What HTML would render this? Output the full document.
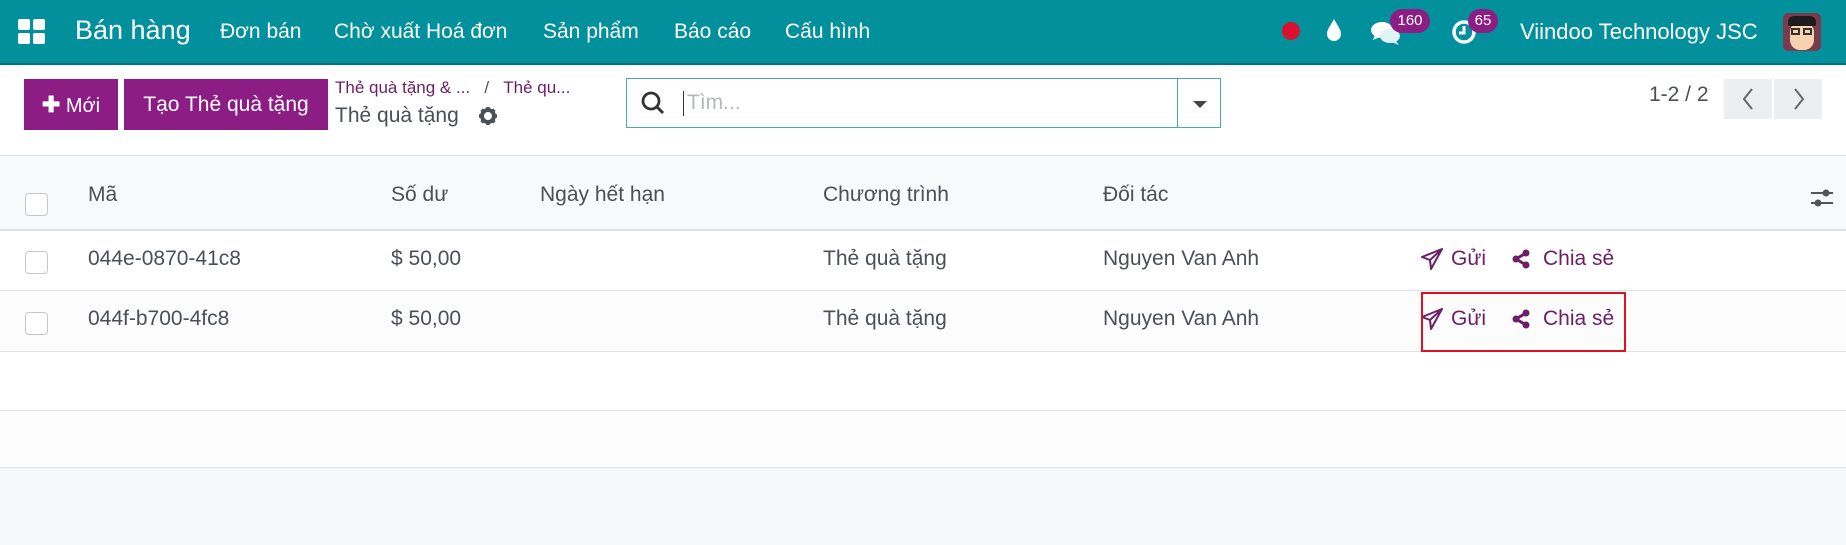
<!DOCTYPE html>
<html><head><meta charset="utf-8"><style>
*{box-sizing:border-box;margin:0;padding:0}
body{width:1846px;height:545px;overflow:hidden;background:#f7f8fa;font-family:"Liberation Sans",sans-serif;color:#374151;position:relative}
.a{position:absolute;white-space:nowrap}
.nav{position:absolute;left:0;top:0;width:1846px;height:65px;background:#01909c;border-bottom:2px solid #05707a}
.nav .a{color:#fff;font-size:21px;top:20px}
.btn{position:absolute;top:79px;height:51px;background:#8c1d84;color:#fff;font-size:21px;line-height:51px;text-align:center}
.hr{position:absolute;left:0;width:1846px;height:1px;background:#dee2e6}
.cb{position:absolute;left:25px;width:23px;height:23px;border:1px solid #c4c8cc;border-radius:4px;background:#fff}
.t{font-size:21px;color:#4b5057}
.l{font-size:21px;color:#6b1f67}
.badge{position:absolute;background:#8c1d84;color:#fff;border-radius:12px;font-size:15px;height:24px;line-height:24px;text-align:center}
</style></head><body>
<div class="nav">
 <svg class="a" style="left:18px;top:19px" width="28" height="26" viewBox="0 0 28 26"><rect x="0" y="0" width="12" height="11" rx="2" fill="#fff"/><rect x="15" y="0" width="12" height="11" rx="2" fill="#fff"/><rect x="0" y="14" width="12" height="11" rx="2" fill="#fff"/><rect x="15" y="14" width="12" height="11" rx="2" fill="#fff"/></svg>
 <div class="a" style="left:75px;top:15px;font-size:27px">Bán hàng</div>
 <div class="a" style="left:220px">Đơn bán</div>
 <div class="a" style="left:334px">Chờ xuất Hoá đơn</div>
 <div class="a" style="left:543px">Sản phẩm</div>
 <div class="a" style="left:674px">Báo cáo</div>
 <div class="a" style="left:785px">Cấu hình</div>
 <div class="a" style="left:1282px;top:22px;width:18px;height:18px;border-radius:50%;background:#d9112c"></div>
 <svg class="a" style="left:1326px;top:18px" width="16" height="24" viewBox="0 0 16 24"><path d="M8 1C5 7 1 11 1 16a7 7 0 0 0 14 0C15 11 11 7 8 1z" fill="#fff"/></svg>
 <svg class="a" style="left:1370px;top:19px" width="32" height="28" viewBox="0 0 32 28"><ellipse cx="12" cy="11" rx="11" ry="8" fill="#fff"/><path d="M5 16l-2 5 7-3z" fill="#fff"/><ellipse cx="20" cy="17" rx="10" ry="7" fill="#e0f2f4"/><path d="M25 21l4 5-8-3z" fill="#e0f2f4"/></svg>
 <div class="badge" style="left:1390px;top:9px;width:40px">160</div>
 <svg class="a" style="left:1451px;top:19px" width="26" height="26" viewBox="0 0 26 26"><circle cx="13" cy="13" r="10" fill="none" stroke="#fff" stroke-width="3.5"/><path d="M13 7v7h-5" fill="none" stroke="#fff" stroke-width="3"/></svg>
 <div class="badge" style="left:1468px;top:9px;width:30px">65</div>
 <div class="a" style="left:1520px;top:19px;font-size:22px">Viindoo Technology JSC</div>
 <div class="a" style="left:1783px;top:13px;width:38px;height:38px;border-radius:5px;background:#7a3b4a;overflow:hidden">
  <div style="position:absolute;left:7px;top:9px;width:24px;height:28px;border-radius:10px;background:#f6d2b0"></div>
  <div style="position:absolute;left:5px;top:3px;width:28px;height:10px;border-radius:6px 6px 2px 2px;background:#1f1a1c"></div>
  <div style="position:absolute;left:8px;top:15px;width:9px;height:7px;border:2px solid #333"></div>
  <div style="position:absolute;left:20px;top:15px;width:9px;height:7px;border:2px solid #333"></div>
 </div>
</div>
<div class="a" style="left:0;top:67px;width:1846px;height:88px;background:#fff"></div>
<div class="btn" style="left:24px;width:94px;font-size:20px"><b style="font-size:22px">✚</b> Mới</div>
<div class="btn" style="left:124px;width:204px">Tạo Thẻ quà tặng</div>
<div class="a" style="left:335px;top:78px;font-size:17px;color:#6b1f67">Thẻ quà tặng &amp; ...&nbsp;&nbsp;&nbsp;<span style="color:#555">/</span>&nbsp;&nbsp;&nbsp;Thẻ qu...</div>
<div class="a" style="left:335px;top:104px;font-size:21px;color:#4b5057">Thẻ quà tặng</div>
<svg class="a" style="left:478px;top:106px" width="20" height="20" viewBox="0 0 20 20"><circle cx="10" cy="10" r="6" fill="none" stroke="#4b5057" stroke-width="4"/><g stroke="#4b5057" stroke-width="3.5"><path d="M10 1v4M10 15v4M1 10h4M15 10h4M3.6 3.6l2.8 2.8M13.6 13.6l2.8 2.8M3.6 16.4l2.8-2.8M13.6 6.4l2.8-2.8"/></g></svg>
<div class="a" style="left:626px;top:78px;width:595px;height:50px;border:1px solid #4aa8b2;background:#fff"></div>
<div class="a" style="left:1177px;top:79px;width:1px;height:48px;background:#4aa8b2"></div>
<svg class="a" style="left:640px;top:90px" width="26" height="26" viewBox="0 0 26 26"><circle cx="11" cy="11" r="8" fill="none" stroke="#333" stroke-width="2.8"/><path d="M17 17l6 6" stroke="#333" stroke-width="3"/></svg>
<div class="a" style="left:683px;top:91px;width:1px;height:25px;background:#333"></div>
<div class="a" style="left:687px;top:91px;font-size:21px;color:#b4b8bd">Tìm...</div>
<div class="a" style="left:1193px;top:101px;border-left:7px solid transparent;border-right:7px solid transparent;border-top:7px solid #444"></div>
<div class="a" style="left:1649px;top:83px;font-size:21px;color:#4b5057">1-2 / 2</div>
<div class="a" style="left:1724px;top:79px;width:48px;height:40px;background:#eceef0"></div>
<div class="a" style="left:1774px;top:79px;width:48px;height:40px;background:#eceef0"></div>
<svg class="a" style="left:1740px;top:87px" width="16" height="24" viewBox="0 0 16 24"><path d="M12 2L4 12l8 10" fill="none" stroke="#666" stroke-width="2"/></svg>
<svg class="a" style="left:1791px;top:87px" width="16" height="24" viewBox="0 0 16 24"><path d="M4 2l8 10-8 10" fill="none" stroke="#666" stroke-width="2"/></svg>
<div class="hr" style="top:155px"></div>
<div class="a" style="left:0;top:156px;width:1846px;height:73px;background:#f8f9fa"></div>
<div class="hr" style="top:229px;height:2px"></div>
<div class="a" style="left:0;top:231px;width:1846px;height:60px;background:#fff"></div>
<div class="hr" style="top:290px"></div>
<div class="a" style="left:0;top:291px;width:1846px;height:60px;background:#fcfcfd"></div>
<div class="hr" style="top:351px"></div>
<div class="a" style="left:0;top:352px;width:1846px;height:58px;background:#fff"></div>
<div class="hr" style="top:410px"></div>
<div class="a" style="left:0;top:411px;width:1846px;height:57px;background:#fcfcfc"></div>
<div class="hr" style="top:467px"></div>
<div class="cb" style="top:193px"></div>
<div class="cb" style="top:251px"></div>
<div class="cb" style="top:312px"></div>
<div class="a t" style="left:88px;top:183px">Mã</div>
<div class="a t" style="left:391px;top:183px">Số dư</div>
<div class="a t" style="left:540px;top:183px">Ngày hết hạn</div>
<div class="a t" style="left:823px;top:183px">Chương trình</div>
<div class="a t" style="left:1103px;top:183px">Đối tác</div>
<svg class="a" style="left:1810px;top:186px" width="24" height="24" viewBox="0 0 24 24"><path d="M1 7h22M1 17h22" stroke="#555" stroke-width="2"/><circle cx="16" cy="7" r="3.5" fill="#555"/><circle cx="8" cy="17" r="3.5" fill="#555"/></svg>
<div class="a t" style="left:88px;top:247px">044e-0870-41c8</div>
<div class="a t" style="left:391px;top:247px">$ 50,00</div>
<div class="a t" style="left:823px;top:247px">Thẻ quà tặng</div>
<div class="a t" style="left:1103px;top:247px">Nguyen Van Anh</div>
<div class="a t" style="left:88px;top:307px">044f-b700-4fc8</div>
<div class="a t" style="left:391px;top:307px">$ 50,00</div>
<div class="a t" style="left:823px;top:307px">Thẻ quà tặng</div>
<div class="a t" style="left:1103px;top:307px">Nguyen Van Anh</div>
<svg class="a" style="left:1421px;top:248px" width="22" height="22" viewBox="0 0 22 22"><path d="M21 1L1 9l8 3 1 9 11-20zM9 12L21 1" fill="none" stroke="#6b1f67" stroke-width="2" stroke-linejoin="round"/></svg>
<div class="a l" style="left:1451px;top:247px">Gửi</div>
<svg class="a" style="left:1511px;top:249px" width="20" height="20" viewBox="0 0 20 20"><path d="M15 4L5 10l10 6" stroke="#6b1f67" stroke-width="3" fill="none"/><circle cx="15" cy="4" r="3.5" fill="#6b1f67"/><circle cx="5" cy="10" r="3.5" fill="#6b1f67"/><circle cx="15" cy="16" r="3.5" fill="#6b1f67"/></svg>
<div class="a l" style="left:1543px;top:247px">Chia sẻ</div>
<svg class="a" style="left:1421px;top:308px" width="22" height="22" viewBox="0 0 22 22"><path d="M21 1L1 9l8 3 1 9 11-20zM9 12L21 1" fill="none" stroke="#6b1f67" stroke-width="2" stroke-linejoin="round"/></svg>
<div class="a l" style="left:1451px;top:307px">Gửi</div>
<svg class="a" style="left:1511px;top:309px" width="20" height="20" viewBox="0 0 20 20"><path d="M15 4L5 10l10 6" stroke="#6b1f67" stroke-width="3" fill="none"/><circle cx="15" cy="4" r="3.5" fill="#6b1f67"/><circle cx="5" cy="10" r="3.5" fill="#6b1f67"/><circle cx="15" cy="16" r="3.5" fill="#6b1f67"/></svg>
<div class="a l" style="left:1543px;top:307px">Chia sẻ</div>
<div class="a" style="left:1421px;top:292px;width:205px;height:60px;border:2px solid #e01020"></div>
</body></html>
